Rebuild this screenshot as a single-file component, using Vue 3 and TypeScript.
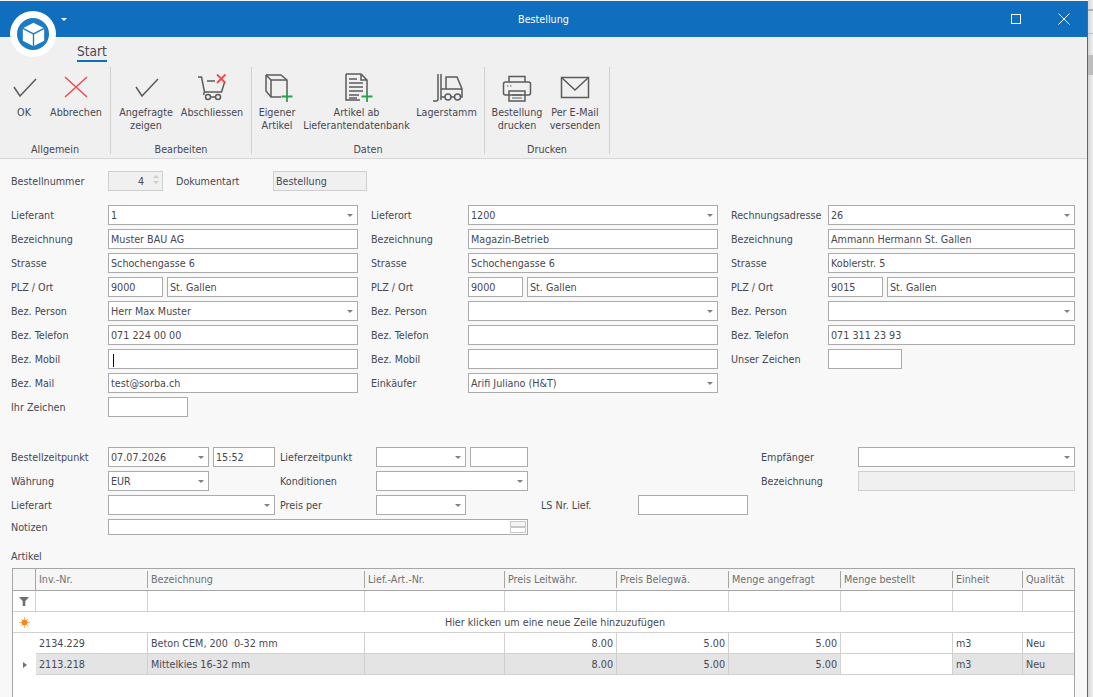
<template>
  <div class="screen">
    <div class="window">
      <header class="titlebar">
        <span class="qat-caret"></span>
        <span class="title">Bestellung</span>
        <span class="win-max"></span>
        <svg class="win-close" width="12" height="12" viewBox="0 0 12 12"><path d="M.5.5l11 11M11.5.5l-11 11" stroke="#fff" fill="none" /></svg>
      </header>

      <div class="logo">
        <div class="logo-inner">
          <svg width="27" height="27" viewBox="0 0 24 24">
            <path d="M12 1.500 21.500 6.500v11L12 22.500l-9.500-5v-11z" fill="#fff" />
            <path d="M2.500 6.500 12 11.500l9.500-5M12 11.500v11" fill="none" stroke="#1a7cc4" stroke-width="1.200" />
          </svg>
        </div>
      </div>

      <section class="ribbon">
        <div class="tabs"><span class="tab">Start</span></div>
        <div class="groups">
          <div v-for="g in groups" :key="g.name" class="group" :style="{ width: g.width + 'px' }">
            <div class="buttons">
              <div v-for="b in g.buttons" :key="b.key" class="rb" :style="{ width: b.width + 'px' }">
                <svg class="rb-icon" width="36" height="32" viewBox="0 0 36 32" fill="none" stroke="#5b5b5b" stroke-width="1.500">
                  <template v-if="b.key === 'ok' || b.key === 'ask'">
                    <path d="M8 14l6 9L30 6" />
                  </template>
                  <template v-else-if="b.key === 'cancel'">
                    <path d="M7 4l22 20M29 4 7 24" stroke="#ee4a4f" />
                  </template>
                  <template v-else-if="b.key === 'close'">
                    <path d="M4 4h3.500l3 15h17l3-9.500" />
                    <path d="M13 8h8" />
                    <path d="M10.500 19l-1 3" />
                    <circle cx="14" cy="24" r="2.500" />
                    <circle cx="24" cy="24" r="2.500" />
                    <path d="M16.500 24h5" />
                    <path d="M23 1.500l8.500 8.500M31.500 1.500 23 10" stroke="#ee4a4f" stroke-width="1.800" />
                  </template>
                  <template v-else-if="b.key === 'own'">
                    <path d="M7 2h15l6 5v11" />
                    <path d="M7 2v16l5 6h10" />
                    <path d="M7 2l5 5h16M12 7v17" />
                    <path d="M28 18v11M22.500 23.500h11" stroke="#2e9e4f" stroke-width="1.800" />
                  </template>
                  <template v-else-if="b.key === 'db'">
                    <path d="M7 1h15l6 6v11M22 1v6h6M7 1v26h14" />
                    <path d="M10 6h8M10 10h14M10 14h14M10 18h14M10 22h10M10 25h8" stroke-width="1.300" />
                    <path d="M28 18v11M22.500 23.500h11" stroke="#2e9e4f" stroke-width="1.800" />
                  </template>
                  <template v-else-if="b.key === 'fork'">
                    <path d="M9 1v25q0 2-2 2H4" />
                    <path d="M12 1v26" />
                    <path d="M17 16V4h11l5 12v8h-1" />
                    <path d="M12 16h21M12 24h4M22 24h3" />
                    <circle cx="19" cy="24" r="3" />
                    <circle cx="28.500" cy="24" r="3" />
                  </template>
                  <template v-else-if="b.key === 'print'">
                    <path d="M10 9V3.500h16V9" />
                    <rect x="4.500" y="9" width="27" height="13" rx="2" />
                    <path d="M10 18h16v10H10z" />
                    <path d="M13 22h10M13 25h10" stroke-width="1.200" />
                    <path d="M8 13h1.500M11 13h1.500" stroke-width="1.200" />
                  </template>
                  <template v-else>
                    <rect x="4.500" y="4.500" width="27" height="20" />
                    <path d="M4.500 4.500 18 17 31.500 4.500" />
                  </template>
                </svg>
                <div class="rb-text">
                  <div v-for="l in b.lines" :key="l">{{ l }}</div>
                </div>
              </div>
            </div>
            <div class="group-name">{{ g.name }}</div>
          </div>
        </div>
      </section>

      <main class="body">
        <div class="doc-row">
          <label class="lab">Bestellnummer</label>
          <div class="inp spin"><span>4</span><i class="arrows"><b class="up"></b><b class="down"></b></i></div>
          <label class="lab doc-lab">Dokumentart</label>
          <div class="inp ro doc-val">Bestellung</div>
        </div>

        <div class="address">
          <div v-for="(col, c) in columns" :key="c" class="addr-col">
            <div v-for="f in col" :key="f.label" class="field">
              <label class="lab">{{ f.label }}</label>
              <template v-if="f.plz">
                <div class="inp plz">{{ f.plz }}</div>
                <div class="inp grow">{{ f.value }}</div>
              </template>
              <div v-else-if="f.combo" class="inp grow combo">{{ f.value }}<em class="caret"></em></div>
              <div v-else-if="f.short" class="inp" :style="{ width: f.short + 'px' }"></div>
              <div v-else class="inp grow">
                <span v-if="f.cursor" class="cursor"></span>{{ f.value }}
              </div>
            </div>
          </div>
        </div>

        <div class="terms">
          <label class="lab c-l1">Bestellzeitpunkt</label>
          <div class="inp combo c-date">07.07.2026<em class="caret"></em></div>
          <div class="inp c-time">15:52</div>
          <label class="lab c-l2">Lieferzeitpunkt</label>
          <div class="inp combo c-ld"><em class="caret"></em></div>
          <div class="inp c-lt"></div>
          <label class="lab c-l4">Empfänger</label>
          <div class="inp combo c-v4"><em class="caret"></em></div>

          <label class="lab c-l1">Währung</label>
          <div class="inp combo c-date">EUR<em class="caret"></em></div>
          <label class="lab c-l2">Konditionen</label>
          <div class="inp combo c-kond"><em class="caret"></em></div>
          <label class="lab c-l4">Bezeichnung</label>
          <div class="inp ro c-v4"></div>

          <label class="lab c-l1">Lieferart</label>
          <div class="inp combo c-art"><em class="caret"></em></div>
          <label class="lab c-l2">Preis per</label>
          <div class="inp combo c-ld"><em class="caret"></em></div>
          <label class="lab c-l3">LS Nr. Lief.</label>
          <div class="inp c-v3"></div>

          <label class="lab c-l1 notes-lab">Notizen</label>
          <div class="inp notes"><span class="memo"></span></div>
        </div>

        <div class="art-title">Artikel</div>
        <div class="grid">
          <div class="row head">
            <div class="cell ind"></div>
            <div v-for="h in headers" :key="h" class="cell">{{ h }}</div>
          </div>
          <div class="row filter">
            <div class="cell ind">
              <svg width="10" height="10" viewBox="0 0 10 10"><path d="M0 1h10L6.300 5.200V10H3.700V5.200z" fill="#707070" /></svg>
            </div>
            <div v-for="h in headers" :key="h" class="cell"></div>
          </div>
          <div class="row new-row">
            <div class="cell ind">
              <svg width="11" height="11" viewBox="0 0 11 11">
                <path d="M5.500 0v11M0 5.500h11M1.700 1.700l7.600 7.600M9.300 1.700 1.700 9.300" stroke="#fbb77a" />
                <circle cx="5.500" cy="5.500" r="3" fill="#f58a1f" />
              </svg>
            </div>
            <div class="new-text">Hier klicken um eine neue Zeile hinzuzufügen</div>
          </div>
          <div v-for="(r, i) in rows" :key="r[0]" class="row data" :class="{ selected: i === 1 }">
            <div class="cell ind"><span v-if="i === 1" class="pointer"></span></div>
            <div
              v-for="(v, j) in r"
              :key="j"
              class="cell"
              :class="{ num: j >= 3 && j <= 5, plain: j === 6 }"
            >{{ v }}</div>
          </div>
        </div>
      </main>
    </div>
    <div class="behind"></div>
  </div>
</template>

<script setup lang="ts">
interface Field {
  label: string
  value?: string
  combo?: boolean
  plz?: string
  short?: number
  cursor?: boolean
}

const groups = [
  {
    name: 'Allgemein',
    width: 111,
    buttons: [
      { key: 'ok', width: 42, lines: ['OK'] },
      { key: 'cancel', width: 62, lines: ['Abbrechen'] },
    ],
  },
  {
    name: 'Bearbeiten',
    width: 141,
    buttons: [
      { key: 'ask', width: 64, lines: ['Angefragte', 'zeigen'] },
      { key: 'close', width: 68, lines: ['Abschliessen'] },
    ],
  },
  {
    name: 'Daten',
    width: 233,
    buttons: [
      { key: 'own', width: 44, lines: ['Eigener', 'Artikel'] },
      { key: 'db', width: 115, lines: ['Artikel ab', 'Lieferantendatenbank'] },
      { key: 'fork', width: 65, lines: ['Lagerstamm'] },
    ],
  },
  {
    name: 'Drucken',
    width: 125,
    buttons: [
      { key: 'print', width: 58, lines: ['Bestellung', 'drucken'] },
      { key: 'mail', width: 58, lines: ['Per E-Mail', 'versenden'] },
    ],
  },
]

const columns: Field[][] = [
  [
    { label: 'Lieferant', value: '1', combo: true },
    { label: 'Bezeichnung', value: 'Muster BAU AG' },
    { label: 'Strasse', value: 'Schochengasse 6' },
    { label: 'PLZ / Ort', plz: '9000', value: 'St. Gallen' },
    { label: 'Bez. Person', value: 'Herr Max Muster', combo: true },
    { label: 'Bez. Telefon', value: '071 224 00 00' },
    { label: 'Bez. Mobil', cursor: true },
    { label: 'Bez. Mail', value: 'test@sorba.ch' },
    { label: 'Ihr Zeichen', short: 80 },
  ],
  [
    { label: 'Lieferort', value: '1200', combo: true },
    { label: 'Bezeichnung', value: 'Magazin-Betrieb' },
    { label: 'Strasse', value: 'Schochengasse 6' },
    { label: 'PLZ / Ort', plz: '9000', value: 'St. Gallen' },
    { label: 'Bez. Person', combo: true },
    { label: 'Bez. Telefon' },
    { label: 'Bez. Mobil' },
    { label: 'Einkäufer', value: 'Arifi Juliano (H&T)', combo: true },
  ],
  [
    { label: 'Rechnungsadresse', value: '26', combo: true },
    { label: 'Bezeichnung', value: 'Ammann Hermann St. Gallen' },
    { label: 'Strasse', value: 'Koblerstr. 5' },
    { label: 'PLZ / Ort', plz: '9015', value: 'St. Gallen' },
    { label: 'Bez. Person', combo: true },
    { label: 'Bez. Telefon', value: '071 311 23 93' },
    { label: 'Unser Zeichen', short: 74 },
  ],
]

const headers = [
  'Inv.-Nr.',
  'Bezeichnung',
  'Lief.-Art.-Nr.',
  'Preis Leitwähr.',
  'Preis Belegwä.',
  'Menge angefragt',
  'Menge bestellt',
  'Einheit',
  'Qualität',
]

const rows = [
  ['2134.229', 'Beton CEM, 200\u00a0 0-32 mm', '', '8.00', '5.00', '5.00', '', 'm3', 'Neu'],
  ['2113.218', 'Mittelkies 16-32 mm', '', '8.00', '5.00', '5.00', '', 'm3', 'Neu'],
]
</script>

<style>
html, body {
  margin: 0;
  background: #f4f4f4;
  overflow: hidden;
}
</style>

<style scoped>
.screen {
  display: flex;
  width: 1093px;
  height: 697px;
  overflow: hidden;
  font-family: "DejaVu Sans Condensed", "DejaVu Sans", sans-serif;
  font-stretch: condensed;
  font-size: 10.7px;
  color: #474752;
}

.window {
  position: relative;
  width: 1087px;
  height: 696px;
  margin-top: 1px;
  background: #f8f8f8;
  border-right: 1px solid #2f6fb5;
  flex: none;
}

.behind {
  flex: 1;
  background:
    linear-gradient(#bdbdbd, #bdbdbd) 0 55px / 100% 20px no-repeat,
    linear-gradient(#b0b0b0, #b0b0b0) 0 9px / 100% 2px no-repeat,
    linear-gradient(#bdbdbd, #bdbdbd) 0 33px / 100% 1px no-repeat,
    linear-gradient(90deg, #d6d6d6, #efefef);
}

/* Titelleiste */
.titlebar {
  position: relative;
  display: flex;
  align-items: center;
  justify-content: center;
  height: 36px;
  background: #106ebe;
  color: #fff;
}

.qat-caret {
  position: absolute;
  left: 61px;
  top: 17px;
  border: 3px solid transparent;
  border-top: 3px solid #fff;
  border-bottom: 0;
}

.win-max {
  position: absolute;
  left: 1011px;
  top: 13px;
  width: 8px;
  height: 8px;
  border: 1px solid #fff;
}

.win-close {
  position: absolute;
  left: 1058px;
  top: 12px;
}

.logo {
  position: absolute;
  left: 10px;
  top: 10px;
  width: 46px;
  height: 46px;
  border-radius: 50%;
  background: #fff;
  display: flex;
  align-items: center;
  justify-content: center;
  z-index: 2;
}

.logo-inner {
  width: 32px;
  height: 32px;
  border-radius: 50%;
  background: #1a7cc4;
  display: flex;
  align-items: center;
  justify-content: center;
}

/* Ribbon */
.ribbon {
  height: 121px;
  background: #f0f0f0;
  border-bottom: 1px solid #d6d6d6;
}

.tabs {
  height: 30px;
  padding-left: 77px;
}

.tab {
  display: inline-block;
  height: 16px;
  margin-top: 7px;
  font-size: 13.500px;
  line-height: 14px;
  border-bottom: 2px solid #106ebe;
}

.groups {
  display: flex;
  height: 87px;
}

.group {
  display: flex;
  flex-direction: column;
  align-items: stretch;
  box-sizing: border-box;
  border-right: 1px solid #d0d0d0;
  padding: 0 3px;
  flex: none;
}

.buttons {
  display: flex;
  flex: 1;
}

.rb {
  display: flex;
  flex-direction: column;
  align-items: center;
  flex: none;
}

.rb-icon {
  margin-top: 6px;
}

.rb-text {
  margin-top: 1px;
  text-align: center;
  line-height: 13px;
  white-space: nowrap;
}

.group-name {
  text-align: center;
  height: 12px;
  line-height: 15px;
}

/* Formular */
.body {
  padding: 12px 12px 0 11px;
}

.lab {
  display: block;
  box-sizing: border-box;
  height: 20px;
  padding-top: 1px;
  white-space: nowrap;
  line-height: 20px;
}

.inp {
  position: relative;
  box-sizing: border-box;
  height: 20px;
  background: #fff;
  border: 1px solid #ababab;
  line-height: 18px;
  padding: 1px 2px 0;
  white-space: nowrap;
  overflow: hidden;
}

.ro {
  background: #f0f0f0;
  border-color: #cfcfcf;
}

.grow {
  flex: 1;
}

.doc-row {
  display: flex;
  align-items: center;
  height: 20px;
}

.doc-row > .lab:first-child {
  width: 97px;
}

.spin {
  width: 55px;
  background: #f0f0f0;
  border-color: #cfcfcf;
  text-align: right;
  padding-right: 18px;
}

.arrows {
  position: absolute;
  right: 3px;
  top: 3px;
}

.arrows b {
  display: block;
  border: 3px solid transparent;
}

.arrows .up {
  border-top: 0;
  border-bottom: 3px solid #cdcdcd;
  margin-bottom: 3px;
}

.arrows .down {
  border-bottom: 0;
  border-top: 3px solid #cdcdcd;
}

.doc-lab {
  width: 97px;
  margin-left: 13px;
}

.doc-val {
  width: 94px;
}

.address {
  display: grid;
  grid-template-columns: 347px 347px 344px;
  column-gap: 13px;
  margin-top: 14px;
  height: 236px;
}

.addr-col {
  display: flex;
  flex-direction: column;
  gap: 4px;
}

.field {
  display: flex;
}

.field > .lab {
  width: 97px;
  flex: none;
}

.plz {
  width: 55px;
  margin-right: 4px;
  flex: none;
}

.combo {
  padding-right: 16px;
}

.caret {
  position: absolute;
  right: 4px;
  top: 8px;
  border: 3px solid transparent;
  border-top: 3px solid #808080;
  border-bottom: 0;
}

.cursor {
  display: inline-block;
  width: 1px;
  height: 13px;
  margin-left: 2px;
  vertical-align: middle;
  background: #000;
}

.terms {
  display: grid;
  grid-template-columns: 97px 101px 4px 62px 5px 96px 90px 4px 58px 13px 97px 110px 13px 97px 217px;
  grid-template-rows: 20px 20px 20px 16px;
  row-gap: 4px;
  margin-top: 6px;
}

.c-l1 { grid-column: 1; }
.c-date { grid-column: 2; }
.c-time { grid-column: 4; }
.c-l2 { grid-column: 6; }
.c-ld { grid-column: 7; }
.c-lt { grid-column: 9; }
.c-l3 { grid-column: 11; }
.c-v3 { grid-column: 12; }
.c-l4 { grid-column: 14; }
.c-v4 { grid-column: 15; }
.c-kond { grid-column: 7 / 10; }
.c-art { grid-column: 2 / 5; }

.notes-lab {
  height: 16px;
  line-height: 16px;
}

.notes {
  grid-column: 2 / 10;
  height: 16px;
}

.memo {
  position: absolute;
  right: 1px;
  top: 1px;
  width: 14px;
  height: 4px;
  border: 1px solid #c8c8c8;
  box-shadow: 0 6px 0 -1px #fff, 0 6px 0 0 #c8c8c8;
  background: #f4f4f4;
}

/* Artikel */
.art-title {
  margin-top: 14px;
  line-height: 15px;
}

.grid {
  margin: 4px 0 0 1px;
  height: 140px;
  background: #fff;
  border: 1px solid #a6a6a6;
  border-bottom: 0;
  box-sizing: border-box;
}

.row {
  display: grid;
  grid-template-columns: 23px 112px 217px 140px 112px 112px 112px 112px 70px 51px;
  height: 21px;
  box-sizing: border-box;
  border-bottom: 1px solid #d0d0d0;
}

.cell {
  box-sizing: border-box;
  padding: 0 3px;
  border-right: 1px solid #d0d0d0;
  line-height: 21px;
  white-space: nowrap;
  overflow: hidden;
}

.cell:last-child {
  border-right: 0;
}

.ind {
  display: flex;
  align-items: center;
  justify-content: center;
  padding: 0;
}

.head {
  height: 22px;
  background: #f6f6f6;
  color: #707070;
  border-bottom: 1px solid #a6a6a6;
}

.head .cell {
  line-height: 21px;
  position: relative;
  border-right: 0;
}

.head .cell::after {
  content: "";
  position: absolute;
  right: 0;
  top: 2px;
  bottom: 2px;
  width: 1px;
  background: #a6a6a6;
}

.head .cell:last-child::after {
  display: none;
}

.head .ind::after {
  top: 0;
  bottom: 0;
}

.new-row {
  grid-template-columns: 23px 1fr;
}

.new-row .ind {
  border-right: 0;
}

.new-text {
  text-align: center;
  line-height: 21px;
}

.data {
  border-bottom: 0;
}

.data .cell {
  border-bottom: 1px solid #d0d0d0;
}

.data .ind {
  border: 0;
}

.selected .cell:not(.ind):not(.plain) {
  background: #e4e4e4;
}

.num {
  text-align: right;
}

.pointer {
  border: 3px solid transparent;
  border-left: 4px solid #707070;
  border-right: 0;
}
</style>
